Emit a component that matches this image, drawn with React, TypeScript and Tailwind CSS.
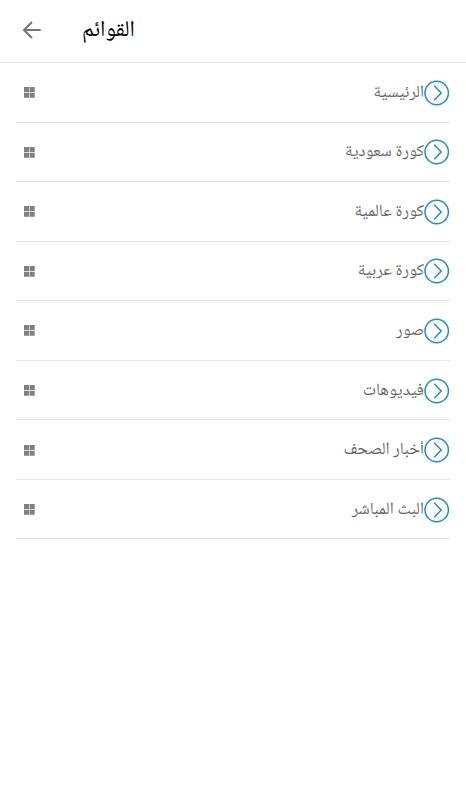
const sections = [
  'الرئيسية',
  'كورة سعودية',
  'كورة عالمية',
  'كورة عربية',
  'صور',
  'فيديوهات',
  'أخبار الصحف',
  'البث المباشر',
];

export default function App() {
  return (
    <div className="min-h-screen bg-white font-['Noto_Naskh_Arabic_UI','Noto_Naskh_Arabic','Noto_Sans_Arabic','DejaVu_Sans_Condensed','DejaVu_Sans',sans-serif]">
      <header className="flex h-[63px] items-center border-b border-[#e6e6e6] pl-[22px]">
        <svg className="-mt-0.5 h-5 w-5 shrink-0" viewBox="0 0 20 20" fill="none" stroke="#757575" strokeWidth="2">
          <path d="M18.7 10H2M10 2L2 10l8 8" />
        </svg>
        <h1 dir="rtl" className="ml-10 text-[22.5px] leading-8 text-black">القوائم</h1>
      </header>

      <ul className="px-4">
        {sections.map((section) => (
          <li key={section} className="flex h-[59.55px] items-center justify-between border-b border-[#e8e8e8] pl-2 pt-px">
            <svg className="h-[11px] w-[11px]" viewBox="0 0 11 11" fill="#808080">
              <path d="M0 0h5.1v5.1H0zM5.7 0h5v5.1h-5zM0 5.7h5.1v5.1H0zM5.7 5.7h5v5.1h-5z" />
            </svg>
            <div className="flex items-center">
              <span dir="rtl" className="text-[17px] leading-6 text-[#666]">{section}</span>
              <svg className="h-[26px] w-[26px]" viewBox="0 0 26 26" fill="none" stroke="#1f8cd3" strokeWidth="1.5">
                <circle cx="12.7" cy="13" r="11.7" />
                <path d="M10.2 5.8l7 7.2-7 7.2" />
              </svg>
            </div>
          </li>
        ))}
      </ul>
    </div>
  );
}
